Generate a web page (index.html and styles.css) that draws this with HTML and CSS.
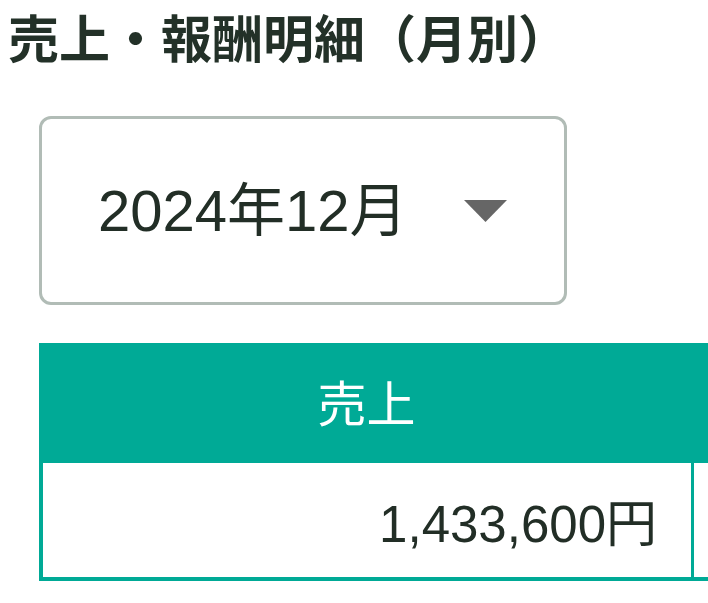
FILE: index.html
```html
<!DOCTYPE html>
<html lang="ja">
<head>
<meta charset="utf-8">
<title>売上・報酬明細（月別）</title>
<link rel="stylesheet" href="styles.css">
</head>
<body>
<div class="page">
  <h1 class="title">売上・報酬明細（月別）</h1>
  <div class="select">
    <span class="select-value">2024年12月</span>
    <svg class="caret" width="43" height="22" viewBox="0 0 43 22"><polygon points="0,0 43,0 21.5,22" fill="#666666"/></svg>
  </div>
  <div class="table-wrap">
    <table class="sales">
      <thead>
        <tr><th class="col-main">売上</th><th class="col-next"></th></tr>
      </thead>
      <tbody>
        <tr><td class="col-main amount">1,433,600円</td><td class="col-next"></td></tr>
      </tbody>
    </table>
  </div>
</div>
</body>
</html>
```
FILE: styles.css
```css
html, body {
  margin: 0;
  padding: 0;
  background: #ffffff;
  overflow: hidden;
}

.page {
  width: 708px;
  height: 603px;
  padding-left: 8px;
  box-sizing: border-box;
  overflow: hidden;
  font-family: "Liberation Sans", "Noto Sans CJK JP", sans-serif;
  color: #222e26;
}

.title {
  margin: 0;
  font-family: "Noto Sans CJK JP", sans-serif;
  font-weight: 700;
  font-size: 51px;
  line-height: 76px;
  height: 76px;
  margin-top: -2px;
  color: #233128;
  white-space: nowrap;
}

.select {
  margin: 42px 0 0 31px;
  width: 528px;
  height: 189px;
  box-sizing: border-box;
  border: 3px solid #b1bcb6;
  border-radius: 12px;
  display: flex;
  align-items: center;
  justify-content: space-between;
  padding: 0 57px 0 56px;
}

.select-value {
  font-size: 58px;
  line-height: 1;
  white-space: nowrap;
}

.caret {
  display: block;
}

.table-wrap {
  margin: 38px 0 0 31px;
}

.sales {
  border-collapse: separate;
  border-spacing: 0;
  table-layout: fixed;
  width: 1000px;
}

.sales th {
  background: #00aa96;
  color: #ffffff;
  font-family: "Noto Sans CJK JP", sans-serif;
  font-weight: 400;
  font-size: 49px;
  height: 120px;
  padding: 0 0 6px 0;
  box-sizing: border-box;
  text-align: center;
}

.sales .col-main {
  width: 655px;
  box-sizing: border-box;
}

.sales td {
  height: 118px;
  box-sizing: border-box;
  padding: 0;
  border-bottom: 4px solid #00aa96;
  border-right: 3px solid #00aa96;
}

.sales td.col-main {
  border-left: 4px solid #00aa96;
}

.amount {
  text-align: right;
  font-size: 51px;
  padding-right: 34px !important;
  white-space: nowrap;
}
```
